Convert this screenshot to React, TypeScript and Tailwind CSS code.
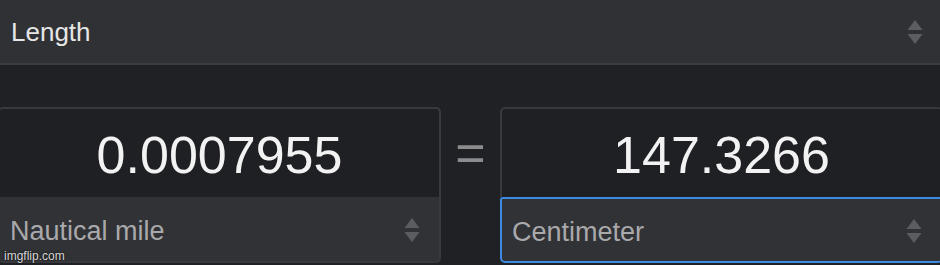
import React from "react";

function Arrows({ className = "" }: { className?: string }) {
  return (
    <svg width="16" height="24" viewBox="0 0 16 24" className={className}>
      <path d="M8 0 L15.5 10 L0.5 10 Z" fill="#5c5d61" />
      <path d="M0.5 14 L15.5 14 L8 24 Z" fill="#5c5d61" />
    </svg>
  );
}

function Panel({ value, unit, active }: { value: string; unit: string; active?: boolean }) {
  return (
    <div className="w-[443px] shrink-0 flex flex-col">
      <div className="h-[90px] rounded-t-[5px] border-2 border-b-0 border-[#38393d] bg-[#1f2024] flex items-center justify-center pt-[4px] text-[52px] text-[#f2f2f2] leading-none">
        {value}
      </div>
      <div
        className={
          "h-[66px] bg-[#313236] border-2 rounded-b-[5px] flex items-center justify-between pl-[10px] pr-[19px] pt-[4px] text-[27px] text-[#a9a9ab] " +
          (active ? "border-[#3d8ae0] rounded-t-[3px]" : "border-[#38393d] border-t-0")
        }
      >
        <span>{unit}</span>
        <Arrows className="-mt-[2px]" />
      </div>
    </div>
  );
}

export default function App() {
  return (
    <div
      className="relative w-[940px] h-[265px] overflow-hidden bg-[#202125]"
      style={{ fontFamily: '"Liberation Sans", Arial, sans-serif' }}
    >
      <div className="h-[65px] bg-[#303135] border-b-2 border-[#3b3c40] flex items-center justify-between pl-[11px] pr-[17px]">
        <span className="text-[26px] text-[#e6e6e6] pt-[1px]">Length</span>
        <Arrows />
      </div>

      <div className="flex items-start pt-[42px] -ml-[2px]">
        <Panel value="0.0007955" unit="Nautical mile" />
        <div className="w-[59px] shrink-0 flex justify-center pt-[20px] text-[52px] leading-none text-[#8c8c8f]">
          =
        </div>
        <Panel value="147.3266" unit="Centimeter" active />
      </div>

      <div className="absolute left-[4px] bottom-[3px] text-[12px] text-[#d8d8d8] leading-none [text-shadow:0_0_2px_#000]">
        imgflip.com
      </div>
    </div>
  );
}
